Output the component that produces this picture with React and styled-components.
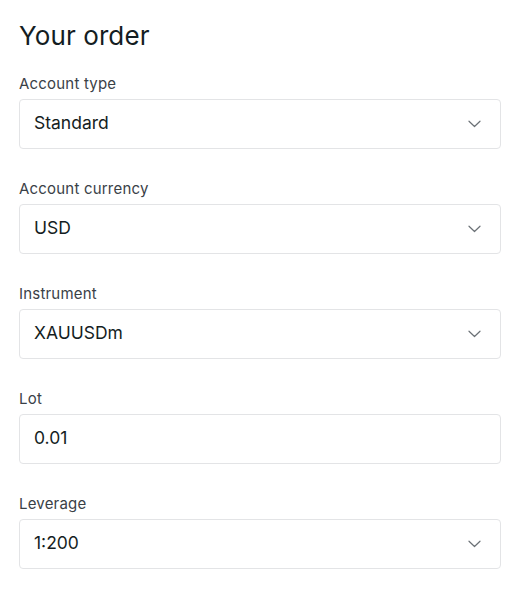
import React from 'react';
import styled, { createGlobalStyle } from 'styled-components';

const GlobalStyle = createGlobalStyle`
  body {
    margin: 0;
    background: #ffffff;
    font-family: Inter, "Noto Sans", sans-serif;
    color: #141d22;
  }
`;

const fields = [
  { label: 'Account type', value: 'Standard', select: true },
  { label: 'Account currency', value: 'USD', select: true },
  { label: 'Instrument', value: 'XAUUSDm', select: true },
  { label: 'Lot', value: '0.01', select: false },
  { label: 'Leverage', value: '1:200', select: true },
];

const Chevron = () => (
  <svg width="13" height="8" viewBox="0 0 13 8" fill="none">
    <path d="M1 1.2L6.5 6.5L12 1.2" stroke="#6b7176" strokeWidth="1.2" strokeLinecap="round" strokeLinejoin="round" />
  </svg>
);

const App = () => {
  return (
    <>
      <GlobalStyle />
      <Panel>
        <Title>Your order</Title>
        <Form>
          {fields.map((f) => (
            <Field key={f.label}>
              <Label>{f.label}</Label>
              <Control>
                <Value>{f.value}</Value>
                {f.select && <Chevron />}
              </Control>
            </Field>
          ))}
        </Form>
      </Panel>
    </>
  );
};

const Panel = styled.div`
  width: 482px;
  padding: 20px 0 0 19px;
`;

const Title = styled.h2`
  margin: 0;
  font-size: 26px;
  line-height: 32px;
  font-weight: 400;
  letter-spacing: 0.1px;
  color: #141d22;
`;

const Form = styled.div`
  display: flex;
  flex-direction: column;
  gap: 31px;
  margin-top: 23px;
`;

const Field = styled.div`
  display: flex;
  flex-direction: column;
  gap: 6px;
`;

const Label = styled.label`
  font-size: 15px;
  line-height: 18px;
  color: #3a4147;
  letter-spacing: 0.2px;
`;

const Control = styled.div`
  height: 48px;
  border: 1px solid #e3e4e6;
  border-radius: 4px;
  display: flex;
  align-items: center;
  justify-content: space-between;
  padding: 0 19px 0 14px;
`;

const Value = styled.span`
  font-size: 17.5px;
  line-height: 22px;
  margin-top: -2px;
  color: #141d22;
`;

export default App;
